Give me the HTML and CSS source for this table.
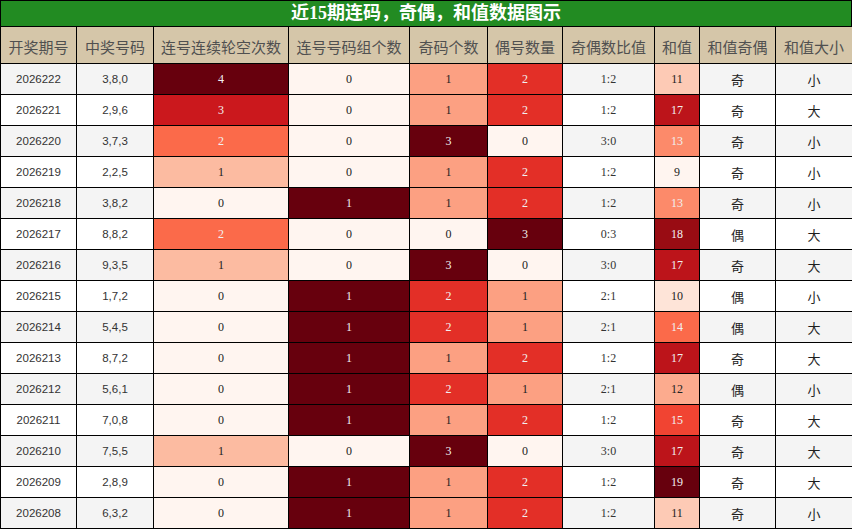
FILE: index.html
```html
<!DOCTYPE html>
<html lang="zh">
<head>
<meta charset="utf-8">
<title>近15期连码，奇偶，和值数据图示</title>
<link rel="stylesheet" href="styles.css">
</head>
<body>
<div class="board">
  <div class="title">近15期连码，奇偶，和值数据图示</div>
  <table class="grid">
    <colgroup>
      <col class="w-issue"><col class="w-nums"><col class="w-gap"><col class="w-grp"><col class="w-odd"><col class="w-even"><col class="w-ratio"><col class="w-sum"><col class="w-sumoe"><col class="w-sumbs">
    </colgroup>
    <thead>
      <tr><th>开奖期号</th><th>中奖号码</th><th>连号连续轮空次数</th><th>连号号码组个数</th><th>奇码个数</th><th>偶号数量</th><th>奇偶数比值</th><th>和值</th><th>和值奇偶</th><th>和值大小</th></tr>
    </thead>
    <tbody>
      <tr><td class="sans">2026222</td><td class="sans">3,8,0</td><td class="num c100">4</td><td class="num c0">0</td><td class="num c33">1</td><td class="num c67">2</td><td class="num">1:2</td><td class="num s11">11</td><td class="cjk">奇</td><td class="cjk">小</td></tr>
      <tr><td class="sans">2026221</td><td class="sans">2,9,6</td><td class="num c75">3</td><td class="num c0">0</td><td class="num c33">1</td><td class="num c67">2</td><td class="num">1:2</td><td class="num s17">17</td><td class="cjk">奇</td><td class="cjk">大</td></tr>
      <tr><td class="sans">2026220</td><td class="sans">3,7,3</td><td class="num c50">2</td><td class="num c0">0</td><td class="num c100">3</td><td class="num c0">0</td><td class="num">3:0</td><td class="num s13">13</td><td class="cjk">奇</td><td class="cjk">小</td></tr>
      <tr><td class="sans">2026219</td><td class="sans">2,2,5</td><td class="num c25">1</td><td class="num c0">0</td><td class="num c33">1</td><td class="num c67">2</td><td class="num">1:2</td><td class="num c0">9</td><td class="cjk">奇</td><td class="cjk">小</td></tr>
      <tr><td class="sans">2026218</td><td class="sans">3,8,2</td><td class="num c0">0</td><td class="num c100">1</td><td class="num c33">1</td><td class="num c67">2</td><td class="num">1:2</td><td class="num s13">13</td><td class="cjk">奇</td><td class="cjk">小</td></tr>
      <tr><td class="sans">2026217</td><td class="sans">8,8,2</td><td class="num c50">2</td><td class="num c0">0</td><td class="num c0">0</td><td class="num c100">3</td><td class="num">0:3</td><td class="num s18">18</td><td class="cjk">偶</td><td class="cjk">大</td></tr>
      <tr><td class="sans">2026216</td><td class="sans">9,3,5</td><td class="num c25">1</td><td class="num c0">0</td><td class="num c100">3</td><td class="num c0">0</td><td class="num">3:0</td><td class="num s17">17</td><td class="cjk">奇</td><td class="cjk">大</td></tr>
      <tr><td class="sans">2026215</td><td class="sans">1,7,2</td><td class="num c0">0</td><td class="num c100">1</td><td class="num c67">2</td><td class="num c33">1</td><td class="num">2:1</td><td class="num s10">10</td><td class="cjk">偶</td><td class="cjk">小</td></tr>
      <tr><td class="sans">2026214</td><td class="sans">5,4,5</td><td class="num c0">0</td><td class="num c100">1</td><td class="num c67">2</td><td class="num c33">1</td><td class="num">2:1</td><td class="num c50">14</td><td class="cjk">偶</td><td class="cjk">大</td></tr>
      <tr><td class="sans">2026213</td><td class="sans">8,7,2</td><td class="num c0">0</td><td class="num c100">1</td><td class="num c33">1</td><td class="num c67">2</td><td class="num">1:2</td><td class="num s17">17</td><td class="cjk">奇</td><td class="cjk">大</td></tr>
      <tr><td class="sans">2026212</td><td class="sans">5,6,1</td><td class="num c0">0</td><td class="num c100">1</td><td class="num c67">2</td><td class="num c33">1</td><td class="num">2:1</td><td class="num s12">12</td><td class="cjk">偶</td><td class="cjk">小</td></tr>
      <tr><td class="sans">2026211</td><td class="sans">7,0,8</td><td class="num c0">0</td><td class="num c100">1</td><td class="num c33">1</td><td class="num c67">2</td><td class="num">1:2</td><td class="num s15">15</td><td class="cjk">奇</td><td class="cjk">大</td></tr>
      <tr><td class="sans">2026210</td><td class="sans">7,5,5</td><td class="num c25">1</td><td class="num c0">0</td><td class="num c100">3</td><td class="num c0">0</td><td class="num">3:0</td><td class="num s17">17</td><td class="cjk">奇</td><td class="cjk">大</td></tr>
      <tr><td class="sans">2026209</td><td class="sans">2,8,9</td><td class="num c0">0</td><td class="num c100">1</td><td class="num c33">1</td><td class="num c67">2</td><td class="num">1:2</td><td class="num c100">19</td><td class="cjk">奇</td><td class="cjk">大</td></tr>
      <tr><td class="sans">2026208</td><td class="sans">6,3,2</td><td class="num c0">0</td><td class="num c100">1</td><td class="num c33">1</td><td class="num c67">2</td><td class="num">1:2</td><td class="num s11">11</td><td class="cjk">奇</td><td class="cjk">小</td></tr>
    </tbody>
  </table>
</div>
</body>
</html>
```

FILE: styles.css
```css
html, body {
  margin: 0;
  padding: 0;
  background: #ffffff;
}

.board {
  width: 852px;
}

.title {
  box-sizing: border-box;
  height: 26px;
  background: #228b22;
  color: #ffffff;
  border: 1px solid #000;
  border-bottom: none;
  font-family: "Liberation Serif", "Noto Sans CJK SC", serif;
  font-weight: bold;
  font-size: 18px;
  line-height: 24px;
  text-align: center;
}

.grid {
  width: 852px;
  border-collapse: collapse;
  table-layout: fixed;
}

.w-issue { width: 76px; }
.w-nums { width: 77px; }
.w-gap { width: 135px; }
.w-grp { width: 121px; }
.w-odd { width: 78px; }
.w-even { width: 75px; }
.w-ratio { width: 92px; }
.w-sum { width: 45px; }
.w-sumoe { width: 76px; }
.w-sumbs { width: 77px; }

.grid th,
.grid td {
  border: 1px solid #000;
  padding: 0;
  text-align: center;
  white-space: nowrap;
  overflow: hidden;
}

.grid th {
  height: 37px;
  background: #d5c6a9;
  color: #505050;
  font-family: "Noto Sans CJK SC", sans-serif;
  font-weight: normal;
  font-size: 15px;
  padding-top: 2px;
  box-sizing: border-box;
}

.grid td {
  height: 30px;
  color: #333;
}

.grid tbody tr:nth-child(odd) td { background-color: #f4f4f4; }
.grid tbody tr:nth-child(even) td { background-color: #ffffff; }

.grid td.sans {
  font-family: "Liberation Sans", "Noto Sans CJK SC", sans-serif;
  font-size: 11.5px;
}

.grid td.num {
  font-family: "Liberation Serif", serif;
  font-size: 12px;
}

.grid td.cjk {
  font-family: "Noto Sans CJK SC", sans-serif;
  font-size: 13px;
  color: #1e1e1e;
}

/* Reds gradient levels (dark text) */
.grid tbody tr td.c0 { background-color: #fff5f0; color: #222; }
.grid tbody tr td.c25 { background-color: #fcbba1; color: #222; }
.grid tbody tr td.c33 { background-color: #fca082; color: #222; }
.grid tbody tr td.s10 { background-color: #fee4d8; color: #222; }
.grid tbody tr td.s11 { background-color: #fdcab5; color: #222; }
.grid tbody tr td.s12 { background-color: #fcab8e; color: #222; }

/* Reds gradient levels (light text) */
.grid tbody tr td.s13 { background-color: #fc8a6a; color: #f1f1f1; }
.grid tbody tr td.c50 { background-color: #fb6a4a; color: #f1f1f1; }
.grid tbody tr td.s15 { background-color: #f14432; color: #f1f1f1; }
.grid tbody tr td.c67 { background-color: #e32f27; color: #f1f1f1; }
.grid tbody tr td.c75 { background-color: #cb181d; color: #f1f1f1; }
.grid tbody tr td.s17 { background-color: #bc141a; color: #f1f1f1; }
.grid tbody tr td.s18 { background-color: #990c13; color: #f1f1f1; }
.grid tbody tr td.c100 { background-color: #67000d; color: #f1f1f1; }
```
